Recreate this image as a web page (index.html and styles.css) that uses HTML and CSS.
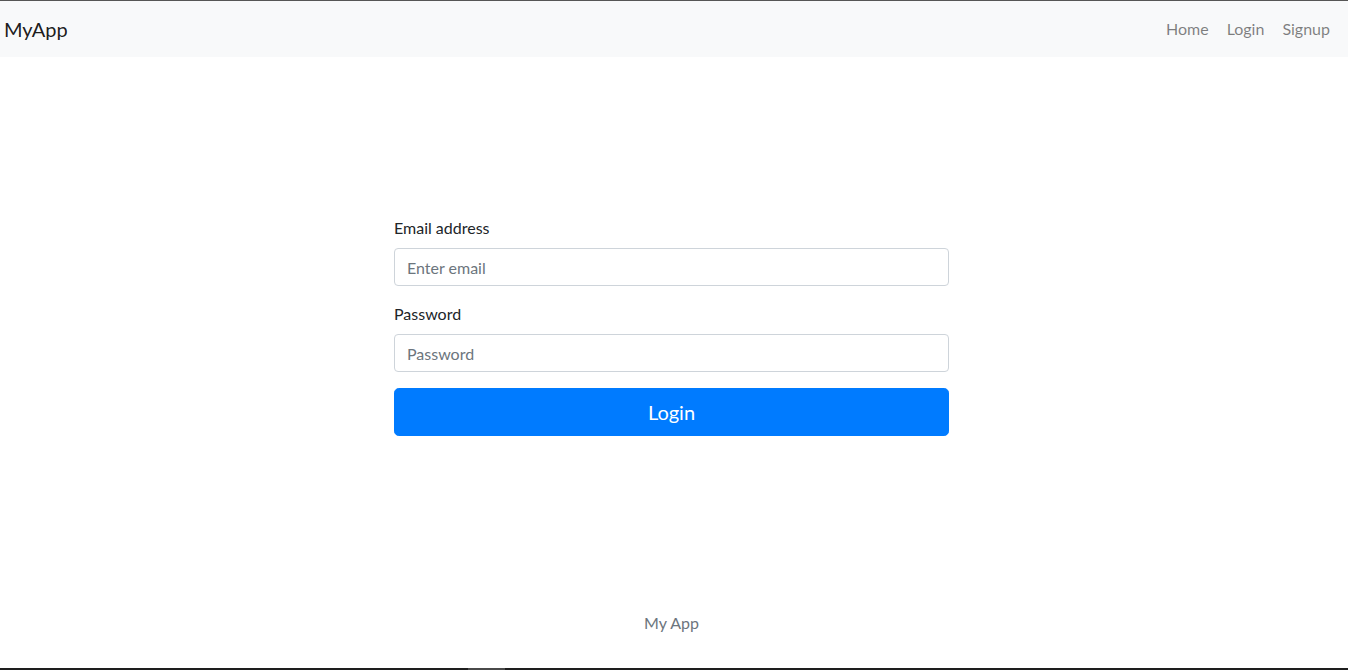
FILE: index.html
```html
<!DOCTYPE html>
<html lang="en">
<head>
<meta charset="utf-8">
<title>MyApp</title>
<link rel="stylesheet" href="styles.css">
</head>
<body>
<div class="page">
  <div class="topline"></div>
  <nav class="navbar">
    <a class="brand" href="#">MyApp</a>
    <div class="nav">
      <a class="nav-link" href="#">Home</a>
      <a class="nav-link" href="#">Login</a>
      <a class="nav-link" href="#">Signup</a>
    </div>
  </nav>
  <main class="main">
    <form class="login-form">
      <div class="form-group">
        <label class="label" for="email">Email address</label>
        <input class="input" id="email" type="email" placeholder="Enter email">
      </div>
      <div class="form-group">
        <label class="label" for="password">Password</label>
        <input class="input" id="password" type="password" placeholder="Password">
      </div>
      <button class="btn" type="button">Login</button>
    </form>
  </main>
  <footer class="footer">My App</footer>
  <div class="bottombar"><span class="bottomseg"></span></div>
</div>
</body>
</html>
```
FILE: styles.css
```css
* { box-sizing: border-box; }
html, body { margin: 0; padding: 0; }
body {
  font-family: "Lato", "Noto Sans", sans-serif;
  font-size: 16px;
  line-height: 1.5;
  color: #212529;
  background: #fff;
}
.page {
  height: 670px;
  display: flex;
  flex-direction: column;
}
.topline { height: 1px; background: #565656; flex: none; }
.navbar {
  height: 56px;
  flex: none;
  background: #f8f9fa;
  display: flex;
  align-items: center;
  justify-content: space-between;
  padding: 0 9px 0 4px;
}
.brand {
  font-size: 20px;
  line-height: 30px;
  color: rgba(0,0,0,.9);
  text-decoration: none;
}
.nav { display: flex; }
.nav-link {
  padding: 8px 9px;
  color: rgba(0,0,0,.5);
  text-decoration: none;
}
.main {
  flex: 1;
  padding-top: 159px;
}
.login-form {
  width: 555px;
  margin-left: calc(50% - 280px);
}
.form-group { margin-bottom: 16px; }
.label {
  display: block;
  margin-bottom: 8px;
}
.input {
  display: block;
  width: 100%;
  height: 38px;
  padding: 6px 12px;
  font: inherit;
  color: #495057;
  border: 1px solid #ced4da;
  border-radius: 4px;
  background: #fff;
}
.input::placeholder { color: #6c757d; opacity: 1; }
.btn {
  display: block;
  width: 100%;
  height: 48px;
  font-family: inherit;
  font-size: 20px;
  line-height: 30px;
  color: #fff;
  background: #007bff;
  border: 1px solid #007bff;
  border-radius: 4.8px;
}
.footer {
  flex: none;
  text-align: center;
  color: #6c757d;
  padding-bottom: 33px;
  padding-right: 5px;
}
.bottombar {
  flex: none;
  height: 2px;
  background: #1e1e1e;
  position: relative;
}
.bottomseg {
  position: absolute;
  left: 468px;
  top: 0;
  width: 37px;
  height: 2px;
  background: #4a4a4a;
}
```
